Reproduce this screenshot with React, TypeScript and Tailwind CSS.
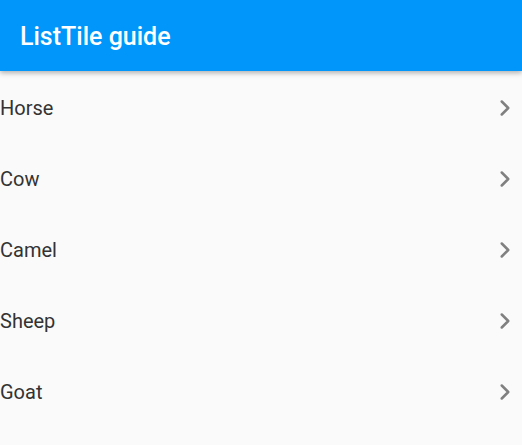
import { ChevronRight } from "lucide-react";

const animals = ["Horse", "Cow", "Camel", "Sheep", "Goat"];

export default function App() {
  return (
    <div className="h-[445px] w-[522px] overflow-hidden bg-[#fafafa] font-['Roboto',sans-serif]">
      <header className="relative z-10 flex h-[71px] items-center bg-[#0096fa] px-5 pt-[2px] shadow-[0_2px_5px_rgba(0,0,0,0.3)]">
        <h1 className="text-[25px] font-medium text-white">ListTile guide</h1>
      </header>
      <ul>
        {animals.map((name) => (
          <li key={name} className="flex h-[71px] items-center justify-between pr-[4px] pt-[2px]">
            <span className="text-[20px] text-[#333]">{name}</span>
            <ChevronRight size={26} strokeWidth={2.3} className="text-[#808080]" />
          </li>
        ))}
      </ul>
    </div>
  );
}
